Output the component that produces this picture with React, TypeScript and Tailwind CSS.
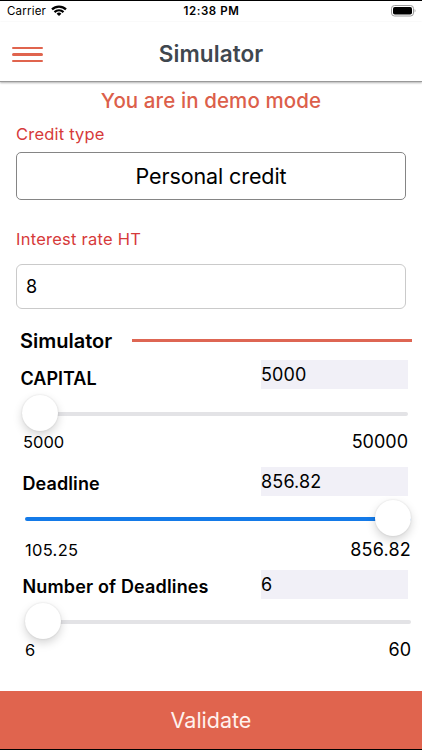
interface SliderRowProps {
    label: string;
    value: string;
    min: string;
    max: string;
    percent: number;
    className: string;
    labelClass: string;
    trackClass: string;
    minClass: string;
    maxClass: string;
    rangeClass: string;
}

const SLIDERS: SliderRowProps[] = [
    {
        label: 'CAPITAL',
        value: '5000',
        min: '5000',
        max: '50000',
        percent: 0,
        className: 'h-[107px]',
        labelClass: 'pl-[20.5px] pt-[7px] text-[18px]',
        trackClass: 'ml-[22px] mr-[14px] mt-[5px]',
        rangeClass: 'pl-[23px] pr-[14px]',
        minClass: 'text-[16.5px]',
        maxClass: 'text-[18px]',
    },
    {
        label: 'Deadline',
        value: '856.82',
        min: '105.25',
        max: '856.82',
        percent: 100,
        className: 'h-[103px]',
        labelClass: 'pl-[22.5px] pt-[5px] text-[18px] tracking-[0.1px]',
        trackClass: 'ml-[25px] mr-[11px] mt-[3px]',
        rangeClass: 'pl-[25px] pr-[11px] pt-[3px]',
        minClass: 'text-[16.5px] tracking-[0.3px]',
        maxClass: 'text-[18px] tracking-[0.2px]',
    },
    {
        label: 'Number of Deadlines',
        value: '6',
        min: '6',
        max: '60',
        percent: 0,
        className: 'h-[121px]',
        labelClass: 'pl-[22.5px] pt-[5px] text-[18px] tracking-[0.15px]',
        trackClass: 'ml-[25px] mr-[11px] mt-[3px]',
        rangeClass: 'pl-[25px] pr-[11px]',
        minClass: 'text-[16.5px]',
        maxClass: 'text-[18px]',
    },
];

function StatusBar() {
    return (
        <div className="grid h-[21px] grid-cols-3 items-center pl-[7px] pr-[6px] text-black">
            <div className="flex items-center gap-[5px]">
                <span className="text-[11.5px] leading-none tracking-[0.2px]">Carrier</span>
                <svg className="-mt-[2px]" width="16" height="12" viewBox="0 0 16 12" fill="none" stroke="currentColor" strokeWidth="2.2">
                    <path d="M1 4.4a10 10 0 0 1 14 0"/>
                    <path d="M3.5 7.1a6.4 6.4 0 0 1 9 0"/>
                    <path d="M8 11 5.6 8.7a3.4 3.4 0 0 1 4.8 0Z" fill="currentColor" stroke="none"/>
                </svg>
            </div>
            <span className="whitespace-nowrap text-center text-[11.5px] font-semibold leading-none tracking-[0.6px]">12:38 PM</span>
            <svg className="-mt-[2px] justify-self-end" width="25" height="12" viewBox="0 0 25 12">
                <rect x="0.5" y="0.5" width="22" height="10.5" rx="3" fill="none" stroke="#9b9b9b"/>
                <rect x="2" y="2" width="19" height="7.5" rx="1.8" fill="#000"/>
                <path d="M23.6 4v3.6c1.2-.6 1.2-3 0-3.6Z" fill="#9b9b9b"/>
            </svg>
        </div>
    );
}

function Header() {
    return (
        <header className="relative flex h-[60px] items-center justify-center border-b border-[#999] bg-white shadow-[0_1px_2px_rgba(0,0,0,0.3)]">
            <button className="absolute left-3 top-[25px] flex w-[31px] flex-col gap-1" aria-label="Menu">
                <span className="h-[2.4px] w-full rounded-full bg-[#e0644e]"/>
                <span className="h-[2.4px] w-full rounded-full bg-[#e0644e]"/>
                <span className="h-[2.4px] w-full rounded-full bg-[#e0644e]"/>
            </button>
            <h1 className="mt-[6px] text-[22.5px] font-semibold leading-none tracking-[0.1px] text-[#40474f]">Simulator</h1>
        </header>
    );
}

function SliderRow(props: SliderRowProps) {
    const {label, value, min, max, percent} = props;
    return (
        <section className={props.className}>
            <div className="flex h-[30px] pr-[14px]">
                <span className={`flex-1 whitespace-nowrap font-semibold leading-[24px] ${props.labelClass}`}>
                    {label}
                </span>
                <span className="h-[29px] w-[147px] bg-[#f1f0f7] text-[18px] leading-[29px] tracking-[0.15px]">{value}</span>
            </div>
            <div className={`relative flex h-9 items-center ${props.trackClass}`}>
                <div className="mt-px h-1 w-full overflow-hidden rounded-full bg-[#e3e3e6]">
                    <div className="h-full bg-[#147ae8]" style={{width: `${percent}%`}}/>
                </div>
                <div
                    className="absolute top-0 size-9 rounded-full bg-white shadow-[0_4px_10px_rgba(0,0,0,0.17),0_0_2px_rgba(0,0,0,0.12)]"
                    style={{left: `${percent}%`, transform: `translateX(-${percent}%)`}}
                />
            </div>
            <div className={`flex items-center justify-between leading-[22px] ${props.rangeClass}`}>
                <span className={props.minClass}>{min}</span>
                <span className={props.maxClass}>{max}</span>
            </div>
        </section>
    );
}

export default function App() {
    return (
        <div className="flex h-[750px] w-[422px] flex-col overflow-hidden border-y border-black bg-white font-['Inter',sans-serif] text-black">
            <StatusBar/>
            <Header/>

            <main className="flex-1">
                <p className="h-[42px] pt-[8px] text-center text-[20.5px] font-medium leading-[22px] tracking-[0.1px] text-[#dc5f4b]">
                    You are in demo mode
                </p>
                <div className="pl-4 pr-4">
                    <div className="h-[28px] text-[16.5px] leading-[20px] tracking-[0.2px] text-[#d63a3a]">Credit type</div>
                    <div className="flex h-12 w-[390px] items-center justify-center rounded-[5px] border border-[#858585] text-[21.5px] tracking-[-0.1px]">
                        Personal credit
                    </div>
                    <div className="h-[64px] pt-[29px] text-[16.5px] leading-[20px] tracking-[0.25px] text-[#d63a3a]">
                        Interest rate HT
                    </div>
                    <div className="flex h-[45px] w-[390px] items-center rounded-md border border-[#cacaca] pl-[9px] text-[18px]">
                        8
                    </div>
                </div>

                <div className="mt-4 flex h-[35px] items-start pl-5 pr-[10px]">
                    <h2 className="w-[112px] text-[20px] font-semibold leading-[32px]">Simulator</h2>
                    <div className="mt-[14px] h-[3px] flex-1 bg-[#de6653]"/>
                </div>

                {SLIDERS.map(slider => (
                    <SliderRow key={slider.label} {...slider}/>
                ))}
            </main>

            <button className="h-[58px] shrink-0 bg-[#e0644e] pt-px text-[21.5px] text-[#fff1ed]">
                Validate
            </button>
        </div>
    );
}
